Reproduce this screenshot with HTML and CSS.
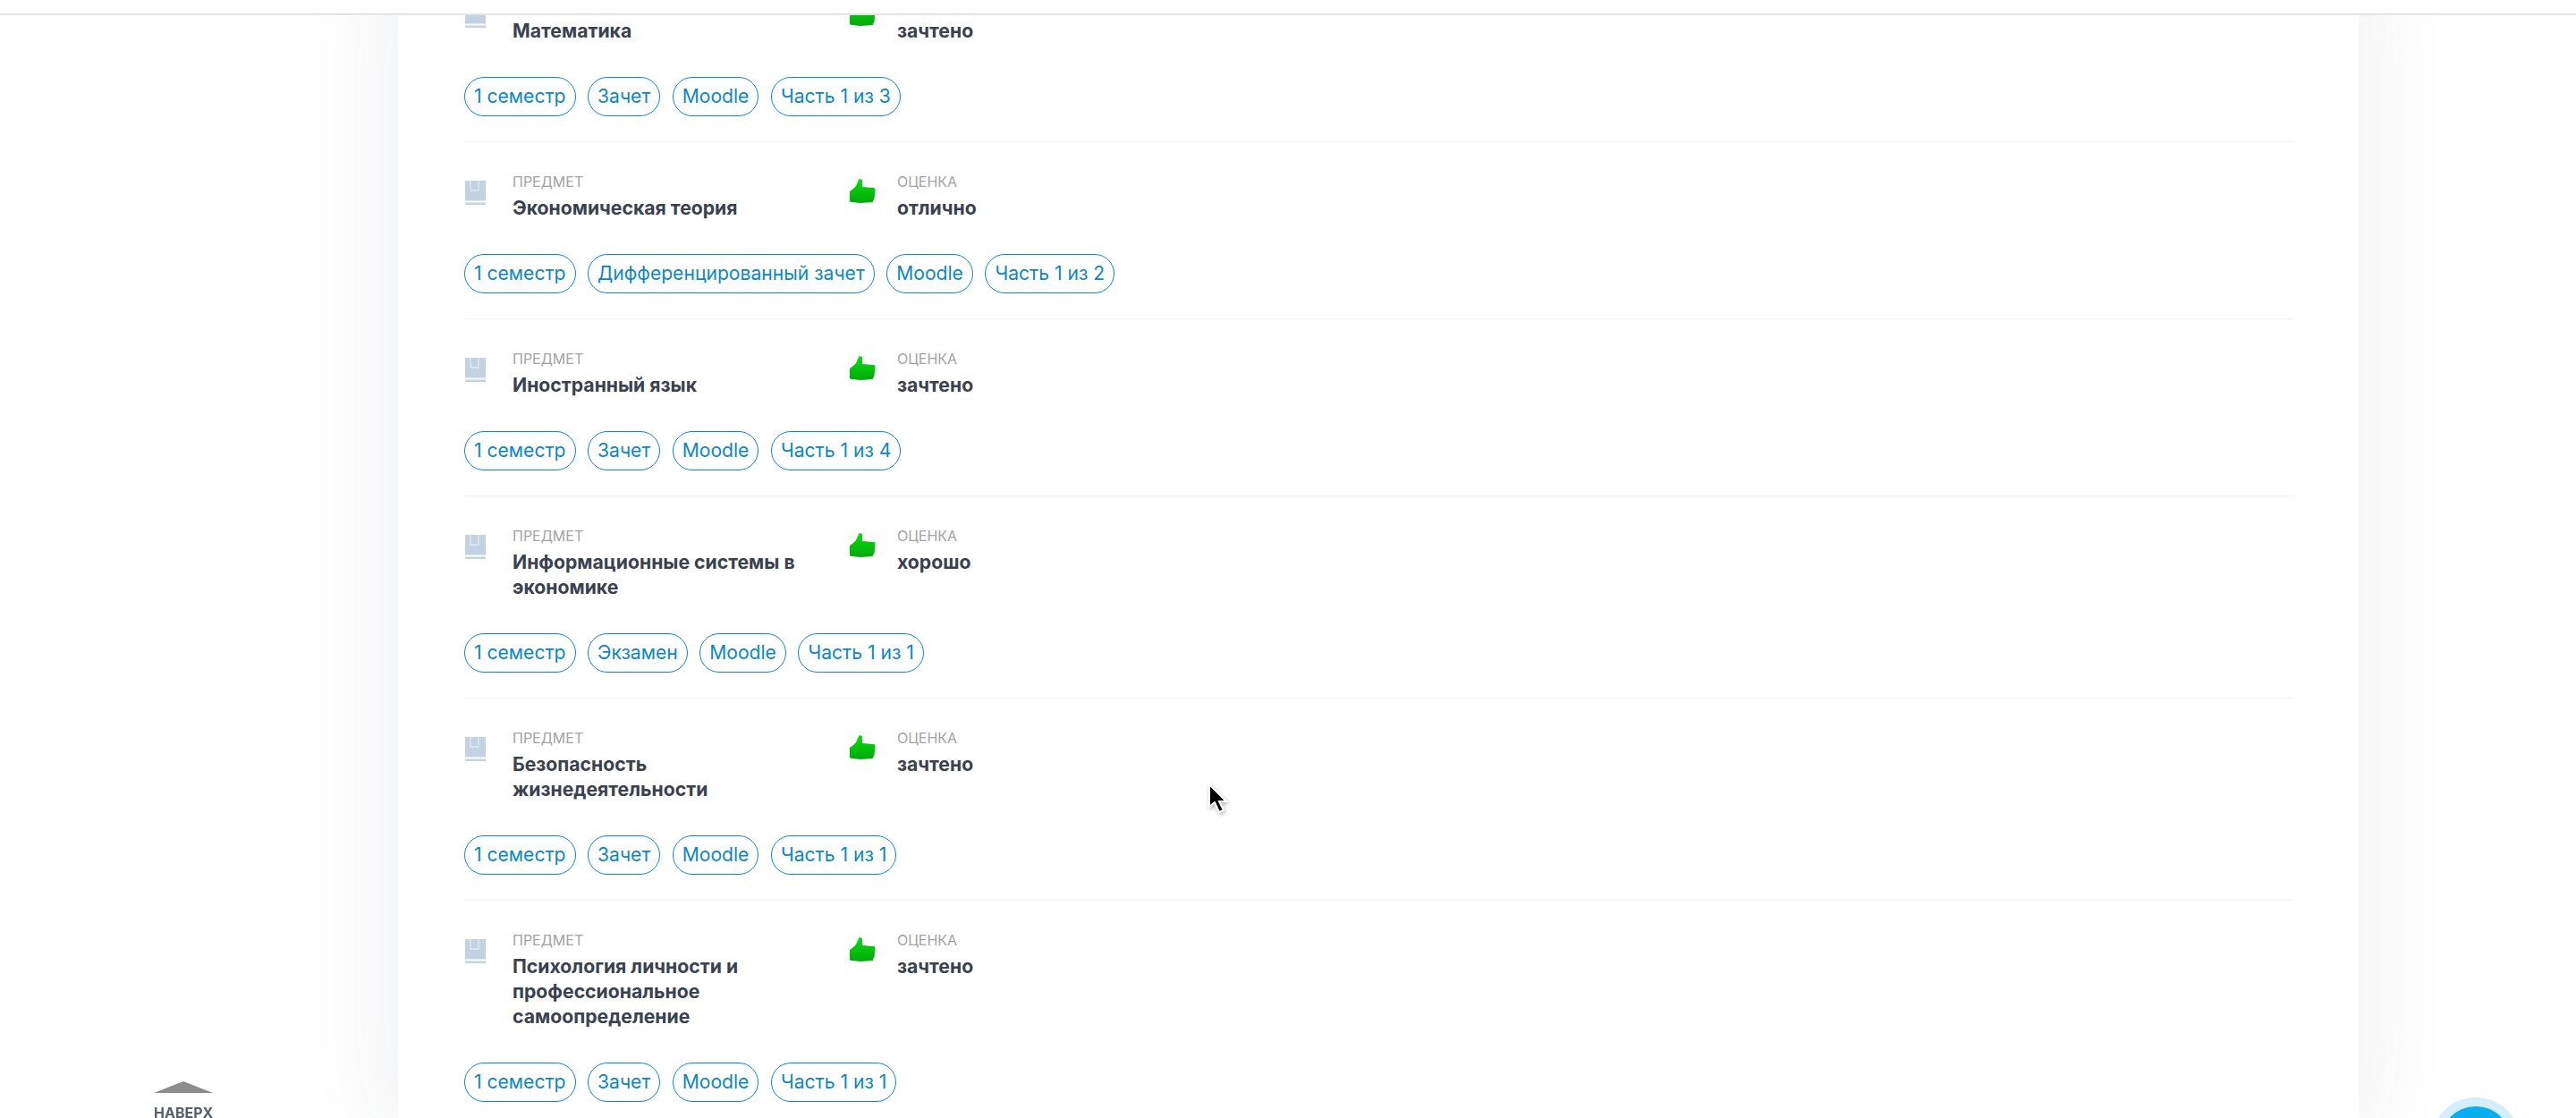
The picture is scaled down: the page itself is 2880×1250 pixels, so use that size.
FILE: index.html
```html
<!DOCTYPE html>
<html lang="en">
<head>
  <meta charset="UTF-8" />
  <meta name="viewport" content="width=device-width, initial-scale=1.0"/>
  <title>Зачетная книжка</title>
  <link rel="stylesheet" href="styles.css">
</head>
<body>
  <div class="top-bar"></div>

  <svg width="0" height="0" class="defs">
    <defs>
      <linearGradient id="thumb-green" x1="0" y1="0" x2="0" y2="1">
        <stop offset="0" stop-color="#0cdc0c"/>
        <stop offset="1" stop-color="#00aa0a"/>
      </linearGradient>
      <symbol id="book" viewBox="0 0 24 28">
        <path fill="#c2d2e2" d="M0 0h23v22.5H0z"/>
        <path fill="none" stroke="#e2eaf2" stroke-width="1.3" d="M6 0V11H15V0"/>
        <path fill="#c2d2e2" d="M0 24.5h23V27H1.5Q0 27 0 25.5z"/>
      </symbol>
      <symbol id="thumb" viewBox="0 0 29 27">
        <path fill="url(#thumb-green)" d="M10.5 0L14 1V9L27 10Q29 10.5 28.5 13L28 17 27.5 22 25.5 26 12 27 3 26Q0 26 0 24V14L4 11 7 8z"/>
      </symbol>
    </defs>
  </svg>

  <div class="card">
    <div class="row">
      <div class="row-head">
        <div class="cell cell-subject">
          <svg class="icon-book"><use href="#book"/></svg>
          <div class="cell-text"><div class="label">ПРЕДМЕТ</div><div class="value">Математика</div></div>
        </div>
        <div class="cell">
          <svg class="icon-thumb"><use href="#thumb"/></svg>
          <div class="cell-text"><div class="label">ОЦЕНКА</div><div class="value">зачтено</div></div>
        </div>
      </div>
      <div class="chips"><span class="chip">1 семестр</span><span class="chip">Зачет</span><span class="chip">Moodle</span><span class="chip">Часть 1 из 3</span></div>
    </div>

    <div class="row">
      <div class="row-head">
        <div class="cell cell-subject">
          <svg class="icon-book"><use href="#book"/></svg>
          <div class="cell-text"><div class="label">ПРЕДМЕТ</div><div class="value">Экономическая теория</div></div>
        </div>
        <div class="cell">
          <svg class="icon-thumb"><use href="#thumb"/></svg>
          <div class="cell-text"><div class="label">ОЦЕНКА</div><div class="value">отлично</div></div>
        </div>
      </div>
      <div class="chips"><span class="chip">1 семестр</span><span class="chip">Дифференцированный зачет</span><span class="chip">Moodle</span><span class="chip">Часть 1 из 2</span></div>
    </div>

    <div class="row">
      <div class="row-head">
        <div class="cell cell-subject">
          <svg class="icon-book"><use href="#book"/></svg>
          <div class="cell-text"><div class="label">ПРЕДМЕТ</div><div class="value">Иностранный язык</div></div>
        </div>
        <div class="cell">
          <svg class="icon-thumb"><use href="#thumb"/></svg>
          <div class="cell-text"><div class="label">ОЦЕНКА</div><div class="value">зачтено</div></div>
        </div>
      </div>
      <div class="chips"><span class="chip">1 семестр</span><span class="chip">Зачет</span><span class="chip">Moodle</span><span class="chip">Часть 1 из 4</span></div>
    </div>

    <div class="row">
      <div class="row-head">
        <div class="cell cell-subject">
          <svg class="icon-book"><use href="#book"/></svg>
          <div class="cell-text"><div class="label">ПРЕДМЕТ</div><div class="value">Информационные системы в экономике</div></div>
        </div>
        <div class="cell">
          <svg class="icon-thumb"><use href="#thumb"/></svg>
          <div class="cell-text"><div class="label">ОЦЕНКА</div><div class="value">хорошо</div></div>
        </div>
      </div>
      <div class="chips"><span class="chip">1 семестр</span><span class="chip">Экзамен</span><span class="chip">Moodle</span><span class="chip">Часть 1 из 1</span></div>
    </div>

    <div class="row">
      <div class="row-head">
        <div class="cell cell-subject">
          <svg class="icon-book"><use href="#book"/></svg>
          <div class="cell-text"><div class="label">ПРЕДМЕТ</div><div class="value">Безопасность жизнедеятельности</div></div>
        </div>
        <div class="cell">
          <svg class="icon-thumb"><use href="#thumb"/></svg>
          <div class="cell-text"><div class="label">ОЦЕНКА</div><div class="value">зачтено</div></div>
        </div>
      </div>
      <div class="chips"><span class="chip">1 семестр</span><span class="chip">Зачет</span><span class="chip">Moodle</span><span class="chip">Часть 1 из 1</span></div>
    </div>

    <div class="row">
      <div class="row-head">
        <div class="cell cell-subject">
          <svg class="icon-book"><use href="#book"/></svg>
          <div class="cell-text"><div class="label">ПРЕДМЕТ</div><div class="value">Психология личности и профессиональное самоопределение</div></div>
        </div>
        <div class="cell">
          <svg class="icon-thumb"><use href="#thumb"/></svg>
          <div class="cell-text"><div class="label">ОЦЕНКА</div><div class="value">зачтено</div></div>
        </div>
      </div>
      <div class="chips"><span class="chip">1 семестр</span><span class="chip">Зачет</span><span class="chip">Moodle</span><span class="chip">Часть 1 из 1</span></div>
    </div>
  </div>

  <a class="to-top"><span class="to-top-arrow"></span>НАВЕРХ</a>
  <div class="help-button"></div>

  <svg class="cursor" width="24" height="36" viewBox="0 0 24 36">
    <path d="M3 2v25l6-5 5 11 5-2-5-10h8z" fill="#000" stroke="#fff" stroke-width="2"/>
  </svg>
</body>
</html>
```

FILE: styles.css
```css
html, body {
  height: 1250px;
  overflow: hidden;
}

body {
  font-family: 'Inter', sans-serif;
  background-color: #fff;
  margin: 0;
  padding: 0;
  color: #3a424e;
}

.defs {
  position: absolute;
}

.top-bar {
  position: fixed;
  top: 0;
  left: 0;
  right: 0;
  height: 15px;
  background-color: #fff;
  border-bottom: 2px solid #e4e4e4;
  z-index: 5;
}

.card {
  width: 2192px;
  box-sizing: border-box;
  margin: -39px 0 0 445px;
  padding: 0 73px 0 74px;
  background-color: #fff;
  box-shadow: 0 0 100px rgba(40,60,90,0.09);
}

.row {
  padding: 34px 0 28px;
  border-bottom: 1px solid #efefef;
}

.row-head {
  display: flex;
}

.cell {
  display: flex;
  align-items: flex-start;
}

.cell-subject {
  width: 431px;
}

.icon-book {
  width: 24px;
  height: 28px;
  margin: 9px 29px 0 1px;
  flex-shrink: 0;
}

.icon-thumb {
  width: 29px;
  height: 27px;
  margin: 7px 24px 0 0;
  flex-shrink: 0;
}

.cell-text {
  width: 340px;
}

.label {
  font-size: 16px;
  line-height: 20px;
  color: #a3a3a3;
}

.value {
  font-size: 21.2px;
  line-height: 28px;
  margin-top: 5px;
  font-weight: 700;
  color: #3a424e;
}

.chips {
  display: flex;
  gap: 13.5px;
  margin-top: 38px;
}

.chip {
  height: 42px;
  line-height: 42px;
  padding: 0 10px;
  border: 1px solid #0b87c9;
  border-radius: 22px;
  font-size: 21.1px;
  color: #0b87c9;
}

.to-top {
  position: fixed;
  left: 172px;
  top: 1209px;
  display: flex;
  flex-direction: column;
  align-items: center;
  font-size: 16px;
  line-height: 20px;
  font-weight: 700;
  color: #555f6e;
}

.to-top-arrow {
  width: 0;
  height: 0;
  border-left: 33px solid transparent;
  border-right: 33px solid transparent;
  border-bottom: 13px solid #8c8c8c;
  margin-bottom: 12px;
}

.help-button {
  position: fixed;
  left: 2718px;
  top: 1227px;
  width: 80px;
  height: 80px;
  background-color: #09aeee;
  border: 10px solid #d4eefc;
  border-radius: 50%;
}

.cursor {
  position: fixed;
  left: 1349px;
  top: 875px;
  filter: drop-shadow(1px 2px 2px rgba(0,0,0,0.3));
}
```
